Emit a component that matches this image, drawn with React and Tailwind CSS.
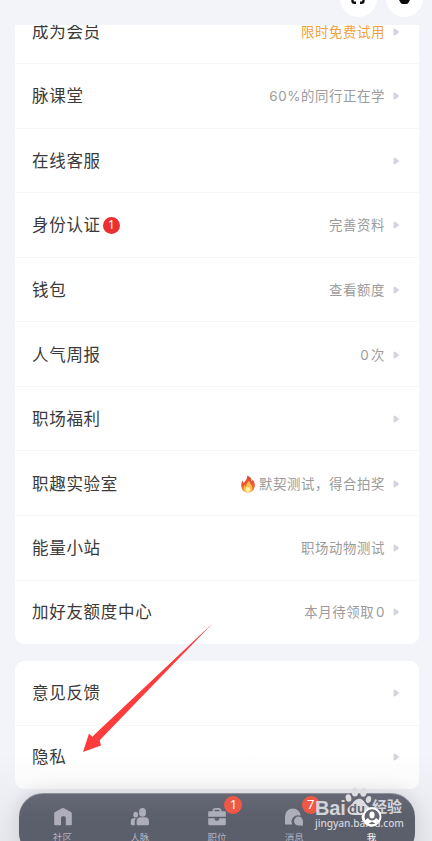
const services = [
  { title: "成为会员", note: "限时免费试用", highlight: true },
  { title: "脉课堂", note: "60%的同行正在学" },
  { title: "在线客服" },
  { title: "身份认证", badge: 1, note: "完善资料" },
  { title: "钱包", note: "查看额度" },
  { title: "人气周报", note: "0次" },
  { title: "职场福利" },
  { title: "职趣实验室", note: "默契测试，得合拍奖", fire: true },
  { title: "能量小站", note: "职场动物测试" },
  { title: "加好友额度中心", note: "本月待领取0" },
];

const settings = [{ title: "意见反馈" }, { title: "隐私" }];

const tabs = [
  { label: "社区", icon: HomeIcon },
  { label: "人脉", icon: PeopleIcon },
  { label: "职位", icon: BriefcaseIcon, badge: 1 },
  { label: "消息", icon: ChatIcon, badge: 7 },
  { label: "我", icon: MeIcon, active: true },
];

export default function App() {
  return (
    <div className="relative flex h-[841px] w-[432px] flex-col overflow-hidden bg-[#f3f4f9] font-['Inter','Noto_Sans_CJK_SC',sans-serif]">
      {/* Header */}
      <header className="flex h-[25px] shrink-0 items-end justify-end gap-[9px] pr-[9px] pb-2">
        <RoundButton>
          <path d="M12.500 12v3M12.500 19.500v2.300q0 2 2 2h1.500M20 23.800h1.500q2 0 2-2v-2.300M23.500 15v-3" stroke="#111" strokeWidth="2.400" fill="none" />
        </RoundButton>
        <RoundButton>
          <path d="M13 16h11v5l-1.800 3q-.7 1-1.700 1h-4q-1 0-1.700-1L13 21z" fill="#0a0a0a" />
        </RoundButton>
      </header>

      {/* Lists */}
      <main className="flex h-[764px] shrink-0 flex-col gap-[17px] pr-[13px] pl-[15px]">
        <section className="flex h-[619px] flex-col justify-end overflow-hidden rounded-b-[9px] bg-white">
          {services.map((item) => (
            <Row key={item.title} {...item} />
          ))}
        </section>
        <section className="flex h-[128px] flex-col justify-end overflow-hidden rounded-[9px] bg-white">
          {settings.map((item) => (
            <Row key={item.title} {...item} />
          ))}
        </section>
      </main>

      {/* Soft shade behind the tab bar */}
      <div className="absolute inset-x-0 bottom-0 h-[90px] bg-linear-to-b from-transparent to-black/5" />

      {/* Tab bar */}
      <nav className="absolute top-[793px] left-[19px] flex h-[64px] w-[396px] justify-center rounded-[24px] border-t border-[#8e8f9b] bg-linear-to-b from-[#666875] to-[#5b5e6b] to-40% px-[5px] shadow-[0_0_20px_rgba(0,0,0,0.14)]">
        {tabs.map((tab) => (
          <Tab key={tab.label} {...tab} />
        ))}
      </nav>

      <Watermark />

      {/* Arrow pointing at the privacy row */}
      <svg className="absolute top-[620px] left-[80px]" width="136" height="134" viewBox="0 0 136 134">
        <path d="M133 3 18 114.500 21 125.500 3 132 9 113.500 12.500 117z" fill="#fe3c3c" />
        <path d="M133 3 12.500 116.500 18 122z" fill="#fe3c3c" />
      </svg>
    </div>
  );
}

function RoundButton({ children }) {
  return (
    <span className="size-[37px] shrink-0 rounded-full bg-white">
      <svg width="37" height="37" viewBox="0 1 37 37">
        {children}
      </svg>
    </span>
  );
}

function Row({ title, note, badge, highlight, fire }) {
  return (
    <div className="flex h-[64.550px] shrink-0 items-center border-b border-[#f5f6f8] pt-px pr-[19px] pl-[17px] last:h-[63.500px] last:border-transparent">
      <span className="text-[16.500px] leading-6 tracking-[0.700px] text-[#3a3a3a]">{title}</span>
      {badge && (
        <span className="ml-[2px] flex size-[17px] items-center justify-center rounded-full bg-[#ec3030] font-['Noto_Sans'] text-[12px] text-white">
          {badge}
        </span>
      )}
      <span className="ml-auto flex items-center">
        {fire && <FireIcon />}
        <span
          className={
            highlight
              ? "text-[13.400px] leading-5 tracking-[0.600px] text-[#f0a03c]"
              : "text-[13.400px] leading-5 tracking-[0.600px] text-[#9b9b9b] [text-autospace:normal]"
          }
        >
          {note}
        </span>
        <svg className="ml-2" width="7" height="8" viewBox="0 0 7 8">
          <path d="M1.500 1.500v5L5 4z" fill="#d2d3de" stroke="#d2d3de" strokeWidth="1.800" strokeLinejoin="round" />
        </svg>
      </span>
    </div>
  );
}

function Tab({ label, icon: Icon, badge, active }) {
  return (
    <div className="relative flex w-[77.250px] flex-col items-center pt-[13px]">
      <Icon />
      <span
        className={
          active
            ? "mt-[4px] text-[9.500px] leading-[14px] text-white"
            : "mt-[4px] text-[9.500px] leading-[14px] text-[#b4b3c0]"
        }
      >
        {label}
      </span>
      {badge && (
        <span className="absolute top-[2px] left-[46px] flex size-[18px] items-center justify-center rounded-full bg-[#ee5845] font-['Noto_Sans'] text-[13px] text-white">
          {badge}
        </span>
      )}
    </div>
  );
}

function HomeIcon() {
  return (
    <svg width="20" height="20" viewBox="0 0 20 20" fill="#aeadba">
      <path d="M1.200 6.500q0-1 .9-1.500L9 1.300q1-.5 2 0L17.900 5q.9.500.9 1.500v11q0 .8-.8.800h-5.200V11q0-1.700-1.600-1.700H9.600Q8 9.300 8 11v7.300H2q-.8 0-.8-.8z" />
    </svg>
  );
}

function PeopleIcon() {
  return (
    <svg width="20" height="20" viewBox="0 0 20 20" fill="#aeadba">
      <ellipse cx="12.500" cy="5.400" rx="3.500" ry="4.300" />
      <path d="M6.600 14.500q0-4.300 4.300-4.300H15q4 0 4 4.300v2.200q0 1.500-1.500 1.500H8.100q-1.500 0-1.500-1.500z" />
      <ellipse cx="5.700" cy="7.700" rx="2.400" ry="2.900" />
      <path d="M.8 14.500q0-3.300 2.700-3.300H6q-1.200 1.200-1.200 3.300v3.800H2q-1.200 0-1.200-1.200z" />
    </svg>
  );
}

function BriefcaseIcon() {
  return (
    <svg width="20" height="20" viewBox="0 0 20 20" fill="#aeadba">
      <path d="M6.500 5V3.600q0-1.800 1.800-1.800h3.400q1.800 0 1.800 1.800V5" fill="none" stroke="#aeadba" strokeWidth="1.800" />
      <path d="M2.500 4.300h15q1.300 0 1.300 1.300v4.200H1.200V5.600q0-1.300 1.300-1.300zM1.200 11.200h6.500q0 2.600 2.300 2.600t2.300-2.600h6.500v5.700q0 1.400-1.400 1.400H2.600q-1.400 0-1.400-1.400z" />
    </svg>
  );
}

function ChatIcon() {
  return (
    <svg width="20" height="20" viewBox="0 0 20 20" fill="#aeadba">
      <path d="M8.800 1.500A7.800 7.800 0 0 0 1 9.300v8.200h7.300a6.400 6.400 0 0 1 8.300-8.700A7.800 7.800 0 0 0 8.800 1.500z" />
      <path d="M14.500 9.600a4.500 4.500 0 1 0 0 9h4.500v-4.500a4.500 4.500 0 0 0-4.500-4.500z" />
    </svg>
  );
}

function MeIcon() {
  return (
    <svg width="20" height="20" viewBox="0 0 20 20" fill="#fff">
      <circle cx="10" cy="9.700" r="8.500" fill="#656774" stroke="#fff" strokeWidth="2" />
      <ellipse cx="10" cy="8" rx="2.600" ry="3.500" />
      <path d="M2.500 13.500 6 11q1.500 2.500 4 2.500t4-2.500l3.500 2.500-3 3.800L10 14.800l-4.500 2.500z" />
    </svg>
  );
}

function FireIcon() {
  return (
    <svg className="mr-[3px]" width="16" height="18" viewBox="0 0 16 18">
      <defs>
        <linearGradient id="flame" x1="0" y1="0" x2="0" y2="1">
          <stop offset="0" stopColor="#d9482f" />
          <stop offset=".6" stopColor="#ef5a38" />
          <stop offset="1" stopColor="#f9a63a" />
        </linearGradient>
      </defs>
      <path
        d="M7.200.5c4.300 1.800 4.500 4.200 4.300 6 .8-.5 1-1.200 1-2 2.200 2.200 2.500 4.500 2.200 7-.4 3.700-3.200 6-6.700 6s-6.300-2.300-6.700-6C1 9 1.500 7 3 5.200c0 1.300.2 2.100.9 2.800C5 6.300 7.700 3.500 7.200.5z"
        fill="url(#flame)"
      />
      <path d="M9.300 5.800c-.2 3 3 3.200 3 7 0 2.700-1.800 4.300-4.300 4.300s-4.400-1.600-4.400-4c0-1.300.5-2.200 1.200-3 .2.900.5 1.300 1.100 1.600.4-2.400 1.400-4.500 3.400-5.900z" fill="#fcc04a" />
      <ellipse cx="8" cy="14.500" rx="2.500" ry="2.400" fill="#fff0a0" />
    </svg>
  );
}

// Logo mark over the lower right corner
function Watermark() {
  return (
    <div className="absolute top-[786px] left-[315px] h-[50px] w-[96px] font-['Liberation_Sans','Noto_Sans_CJK_SC',sans-serif] text-[#d3d4d9]">
      <svg className="absolute top-0 left-[29px]" width="30" height="31" viewBox="0 0 30 31" fill="#dcdce1">
        <ellipse cx="11" cy="6" rx="3.200" ry="4.500" />
        <ellipse cx="19.500" cy="6.200" rx="3.200" ry="4.500" transform="rotate(8 19.500 6.200)" />
        <ellipse cx="4.500" cy="12" rx="2.800" ry="3.800" transform="rotate(-12 4.500 12)" />
        <ellipse cx="24.500" cy="13.500" rx="2.600" ry="3.500" transform="rotate(15 24.500 13.500)" />
        <path d="M14 13c3-.8 5.500 1.200 7 4s5.800 4 5.300 7.500c-.6 5-6 4.600-11.300 4.600S4 29.300 3.500 24.500c-.4-3.400 3.500-4.700 5.300-7.500 1.300-2 3-3.500 5.200-4z" />
      </svg>
      <span className="absolute top-[10px] left-0 text-[20px] leading-[24px] font-bold tracking-[-0.200px]">Bai</span>
      <span className="absolute top-[15px] left-[34px] text-[13px] leading-[15px] font-bold text-[#626471]">du</span>
      <span className="absolute top-[9px] left-[57px] text-[15px] leading-[24px] font-bold">经验</span>
      <span className="absolute top-[30px] left-0 font-['Noto_Sans'] text-[10.200px] leading-[14px] font-medium tracking-[-0.050px] whitespace-nowrap">
        jingyan.baidu.com
      </span>
      <span className="absolute top-[21px] left-[47px]">
        <MeIcon />
      </span>
    </div>
  );
}
